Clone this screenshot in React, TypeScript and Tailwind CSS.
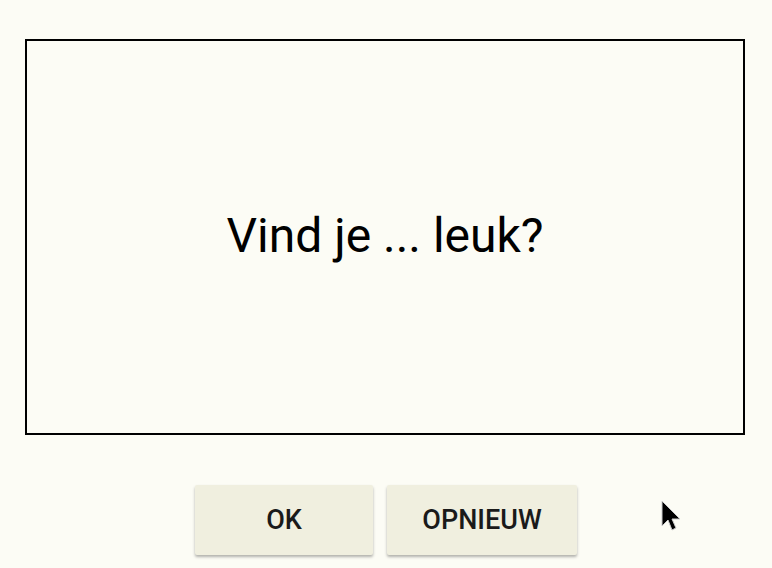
export default function App() {
  return (
    <div
      className="relative w-[772px] h-[568px] overflow-hidden bg-[#fcfcf5] pt-[39px] pl-[25px]"
      style={{ fontFamily: "Roboto, 'Liberation Sans', sans-serif" }}
    >
      {/* Question card */}
      <div className="w-[720px] h-[396px] border-2 border-black flex items-center justify-center">
        <p className="text-[48px] text-black leading-none -mt-[3px]">Vind je ... leuk?</p>
      </div>

      {/* Buttons */}
      <div className="flex justify-center gap-[14px] mt-[50px] -ml-[25px]">
        <button className="w-[178px] h-[70px] bg-[#f0efdf] rounded-[2px] shadow-[0_2px_3px_rgba(0,0,0,0.3)] text-[27px] font-medium text-[#1a1a1a]">
          OK
        </button>
        <button className="w-[190px] h-[70px] bg-[#f0efdf] rounded-[2px] shadow-[0_2px_3px_rgba(0,0,0,0.3)] text-[27px] font-medium text-[#1a1a1a]">
          OPNIEUW
        </button>
      </div>

      {/* Mouse cursor */}
      <svg className="absolute left-[660px] top-[499px]" width="24" height="36" viewBox="0 0 24 36">
        <path d="M2 2 L2 27 L8 21 L12 31 L16 29 L12 20 L20 20 Z" fill="#000" stroke="#ccc" strokeWidth="1" />
      </svg>
    </div>
  );
}
